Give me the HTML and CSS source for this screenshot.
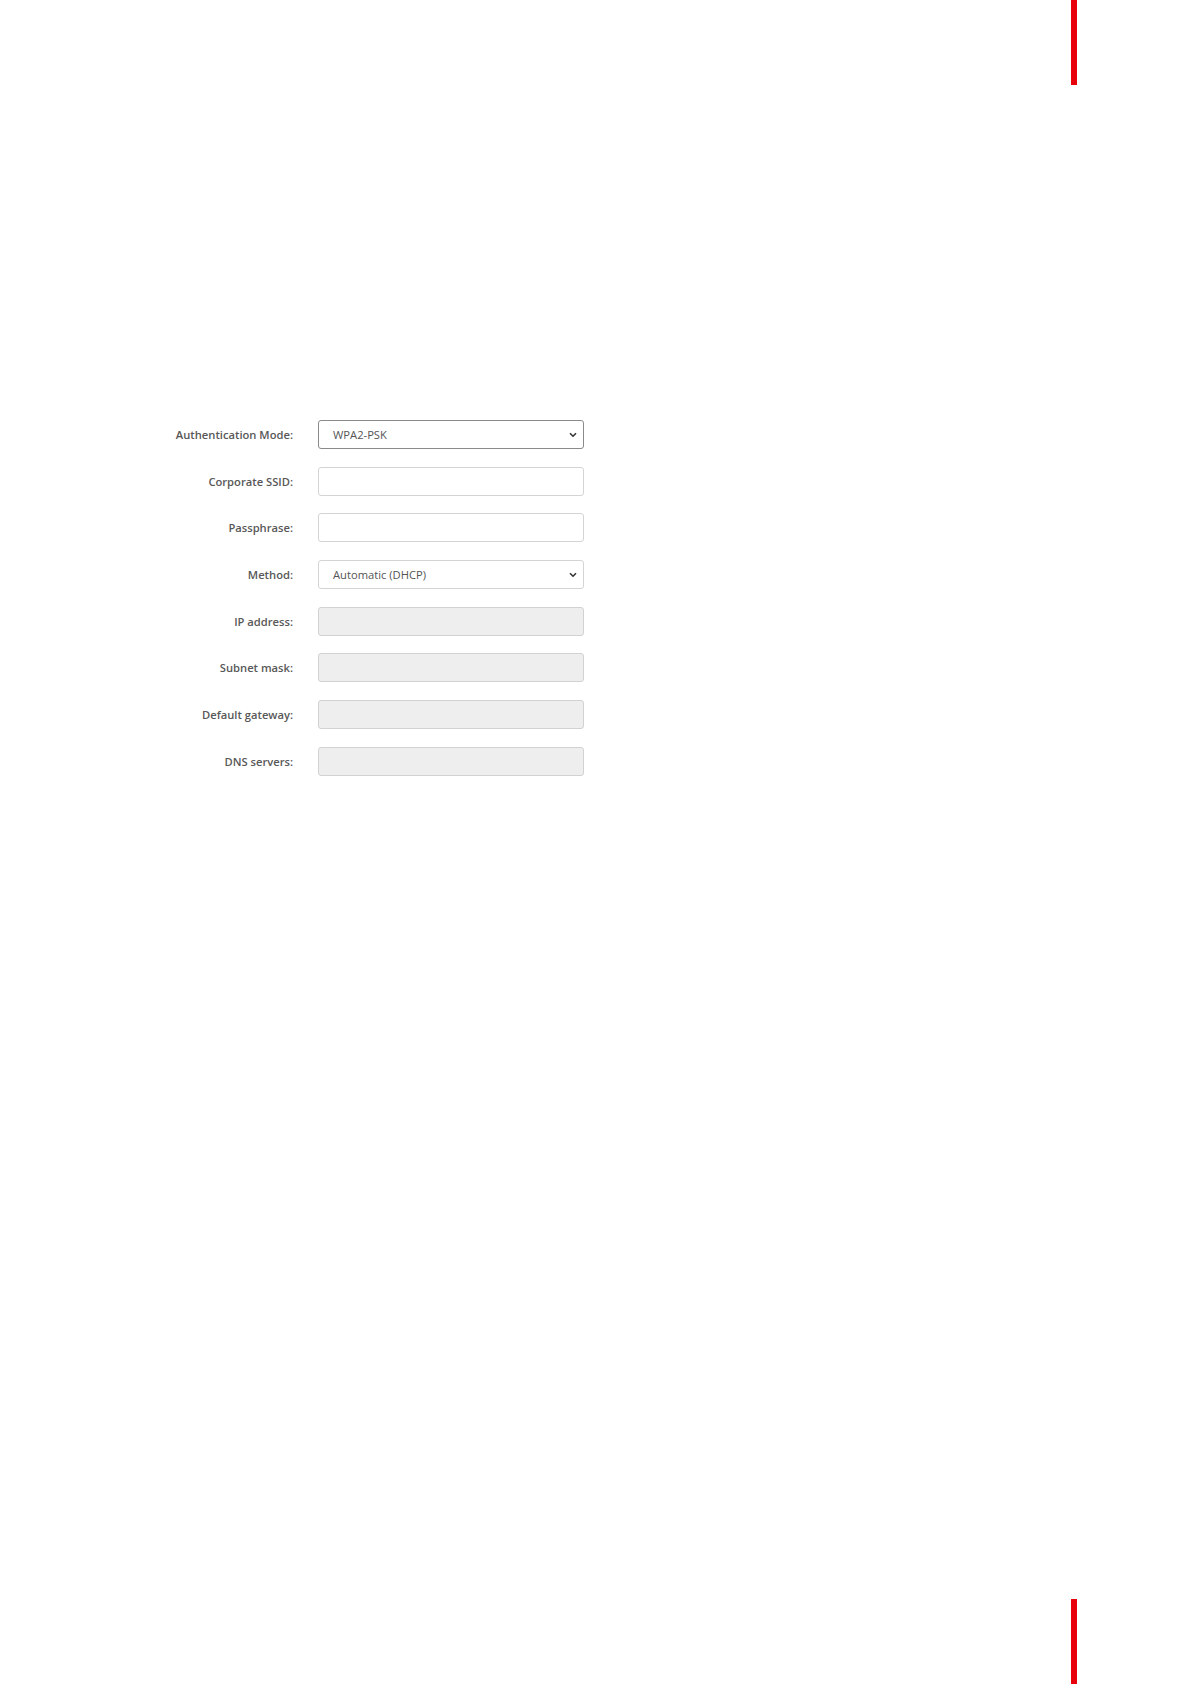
FILE: index.html
```html
<!DOCTYPE html>
<html lang="en">
<head>
<meta charset="utf-8">
<title>Network settings</title>
<link rel="stylesheet" href="styles.css">
</head>
<body>
<div class="page">
  <div class="bar bar-top"></div>
  <form class="form">
    <label class="label">Authentication Mode:</label>
    <div class="field select focused"><span class="value">WPA2-PSK</span><svg class="chev" width="8" height="6" viewBox="0 0 8 6"><path d="M1 1.2 L4 4.2 L7 1.2" fill="none" stroke="#333" stroke-width="1.6"/></svg></div>

    <label class="label">Corporate SSID:</label>
    <div class="field"></div>

    <label class="label">Passphrase:</label>
    <div class="field"></div>

    <label class="label">Method:</label>
    <div class="field select"><span class="value">Automatic (DHCP)</span><svg class="chev" width="8" height="6" viewBox="0 0 8 6"><path d="M1 1.2 L4 4.2 L7 1.2" fill="none" stroke="#333" stroke-width="1.6"/></svg></div>

    <label class="label">IP address:</label>
    <div class="field disabled"></div>

    <label class="label">Subnet mask:</label>
    <div class="field disabled"></div>

    <label class="label">Default gateway:</label>
    <div class="field disabled"></div>

    <label class="label">DNS servers:</label>
    <div class="field disabled"></div>
  </form>
  <div class="spacer"></div>
  <div class="bar bar-bottom"></div>
</div>
</body>
</html>
```

FILE: styles.css
```css
html, body {
  margin: 0;
  padding: 0;
  background: #ffffff;
}

.page {
  width: 1191px;
  height: 1684px;
  display: flex;
  flex-direction: column;
  font-family: "Open Sans", "Noto Sans", "Liberation Sans", sans-serif;
}

.bar {
  width: 6px;
  height: 85px;
  margin-left: 1071px;
  background: #e8000b;
  flex: none;
}

.form {
  margin-top: 335px;
  display: grid;
  grid-template-columns: 293px 266px;
  column-gap: 25px;
  row-gap: 17.7px;
  flex: none;
}

.spacer {
  flex: 1;
}

.label {
  text-align: right;
  align-self: center;
  font-size: 11.2px;
  font-weight: 600;
  color: #585858;
  line-height: 1;
}

.field {
  box-sizing: border-box;
  height: 29px;
  border: 1px solid #d4d4d4;
  border-radius: 3px;
  background: #ffffff;
}

.field.disabled {
  background: #eeeeee;
  border-color: #d2d2d2;
}

.field.select {
  display: flex;
  align-items: center;
  justify-content: space-between;
  padding: 0 6px 0 14px;
}

.field.focused {
  border-color: #8a8a8a;
}

.value {
  font-size: 11.2px;
  color: #555555;
}

.chev {
  display: block;
}
```
